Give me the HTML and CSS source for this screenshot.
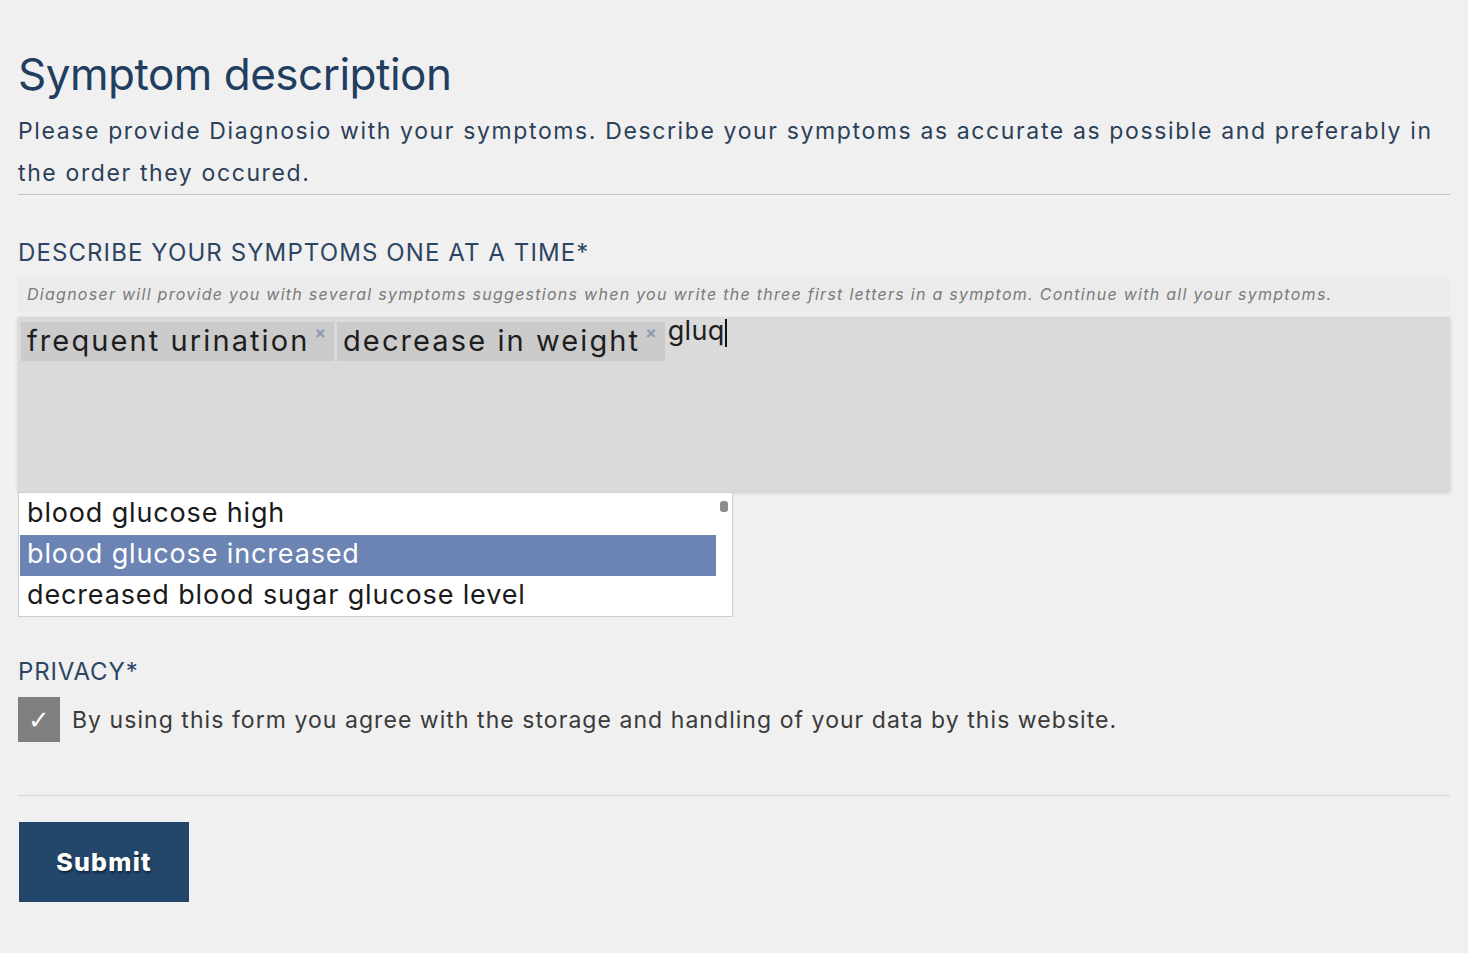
FILE: index.html
```html
<!DOCTYPE html>
<html lang="en">
<head>
<meta charset="utf-8">
<title>Symptom description</title>
<link rel="stylesheet" href="styles.css">
</head>
<body>
<main class="form">
  <h1 class="title">Symptom description</h1>
  <p class="intro">Please provide Diagnosio with your symptoms. Describe your symptoms as accurate as possible and preferably in the order they occured.</p>
  <hr class="rule">

  <section class="field">
    <div class="field-label">DESCRIBE YOUR SYMPTOMS ONE AT A TIME*</div>
    <div class="hint">Diagnoser will provide you with several symptoms suggestions when you write the three first letters in a symptom. Continue with all your symptoms.</div>
    <div class="tag-input">
      <span class="tag">frequent urination<span class="tag-x">×</span></span>
      <span class="tag">decrease in weight<span class="tag-x">×</span></span>
      <span class="typed">gluq<span class="caret"></span></span>
    </div>
    <div class="suggestions">
      <ul class="suggest-list">
        <li class="suggest-item">blood glucose high</li>
        <li class="suggest-item active">blood glucose increased</li>
        <li class="suggest-item">decreased blood sugar glucose level</li>
      </ul>
      <div class="scroll-track"><span class="scroll-thumb"></span></div>
    </div>
  </section>

  <section class="field privacy">
    <div class="field-label">PRIVACY*</div>
    <label class="check">
      <span class="check-box">✓</span>
      <span class="check-text">By using this form you agree with the storage and handling of your data by this website.</span>
    </label>
  </section>

  <hr class="rule rule-bottom">
  <button class="submit" type="button">Submit</button>
</main>
</body>
</html>
```

FILE: styles.css
```css
html, body {
  margin: 0;
  padding: 0;
  background: #f0f0f0;
}
body {
  font-family: Inter, "Open Sans", sans-serif;
}
.form {
  width: 1432px;
  padding: 0 0 40px 18px;
  display: flex;
  flex-direction: column;
}
.title {
  margin: 48px 0 0 0;
  font-size: 44px;
  line-height: 52px;
  font-weight: 400;
  color: #213d5f;
  letter-spacing: -0.5px;
}
.intro {
  margin: 10px 0 0 0;
  font-size: 23px;
  line-height: 42px;
  color: #2b3f58;
  letter-spacing: 1.62px;
}
.rule {
  margin: 0;
  border: 0;
  border-top: 1px solid #c6c6c6;
  height: 0;
}
.field {
  display: flex;
  flex-direction: column;
}
.field-label {
  margin-top: 43px;
  font-size: 24px;
  line-height: 30px;
  color: #2d4563;
  letter-spacing: 1.1px;
}
.hint {
  margin-top: 9px;
  height: 35px;
  background: #ebebeb;
  font-style: italic;
  font-size: 16px;
  line-height: 35px;
  color: #7a7a7a;
  padding-left: 9px;
  letter-spacing: 1.27px;
  white-space: nowrap;
}
.tag-input {
  margin-top: 5px;
  height: 175px;
  background: #dadada;
  box-shadow: 0 1px 4px rgba(0,0,0,0.15);
  display: flex;
  align-items: flex-start;
  gap: 3px;
  padding: 5px 3px;
  box-sizing: border-box;
}
.tag {
  display: inline-flex;
  align-items: flex-start;
  height: 39px;
  background: #cbcbcb;
  padding: 0 8px 0 6px;
  font-size: 29px;
  line-height: 37px;
  color: #1e1e1e;
  letter-spacing: 2.1px;
}
.tag-x {
  font-size: 17px;
  font-weight: 700;
  line-height: 14px;
  color: #8d9bb2;
  margin-left: 5px;
  margin-top: 4px;
  letter-spacing: 0;
}
.typed {
  font-size: 27px;
  line-height: 22px;
  color: #1e1e1e;
  display: inline-flex;
  align-items: flex-start;
  margin-top: -2px;
  letter-spacing: 0.3px;
}
.caret {
  display: inline-block;
  width: 2px;
  height: 28px;
  background: #111;
  margin-top: -1px;
}
.suggestions {
  width: 715px;
  height: 125px;
  box-sizing: border-box;
  background: #ffffff;
  border: 1px solid #cfcfcf;
  display: flex;
  padding: 1px 1px 0 1px;
}
.suggest-list {
  list-style: none;
  margin: 0;
  padding: 0;
  width: 696px;
}
.suggest-item {
  height: 41px;
  line-height: 38px;
  font-size: 27px;
  padding-left: 7px;
  color: #1a1a1a;
  letter-spacing: 0.85px;
}
.suggest-item.active {
  background: #6c84b4;
  color: #ffffff;
}
.scroll-track {
  flex: 1;
  display: flex;
  justify-content: center;
  padding-top: 7px;
}
.scroll-thumb {
  width: 8px;
  height: 11px;
  border-radius: 3px;
  background: #8c8c8c;
}
.privacy .field-label {
  margin-top: 40px;
  letter-spacing: 0.85px;
}
.check {
  margin-top: 10px;
  display: flex;
  align-items: center;
  gap: 12px;
}
.check-box {
  width: 42px;
  height: 45px;
  background: #7f7f7f;
  color: #ffffff;
  font-size: 26px;
  font-weight: 700;
  display: flex;
  align-items: center;
  justify-content: center;
  font-family: "DejaVu Sans", sans-serif;
}
.check-text {
  font-size: 23px;
  color: #3a3a3a;
  letter-spacing: 1.05px;
}
.rule-bottom {
  margin-top: 53px;
  border-top-color: #d6d6d6;
}
.submit {
  margin-top: 26px;
  width: 170px;
  height: 80px;
  align-self: flex-start;
  margin-left: 1px;
  border: 0;
  background: #23466b;
  color: #ffffff;
  font-family: Inter, sans-serif;
  font-weight: 800;
  font-size: 25px;
  letter-spacing: 1.2px;
  text-shadow: 1px 2px 2px rgba(0,0,0,0.45);
  cursor: pointer;
}
```
